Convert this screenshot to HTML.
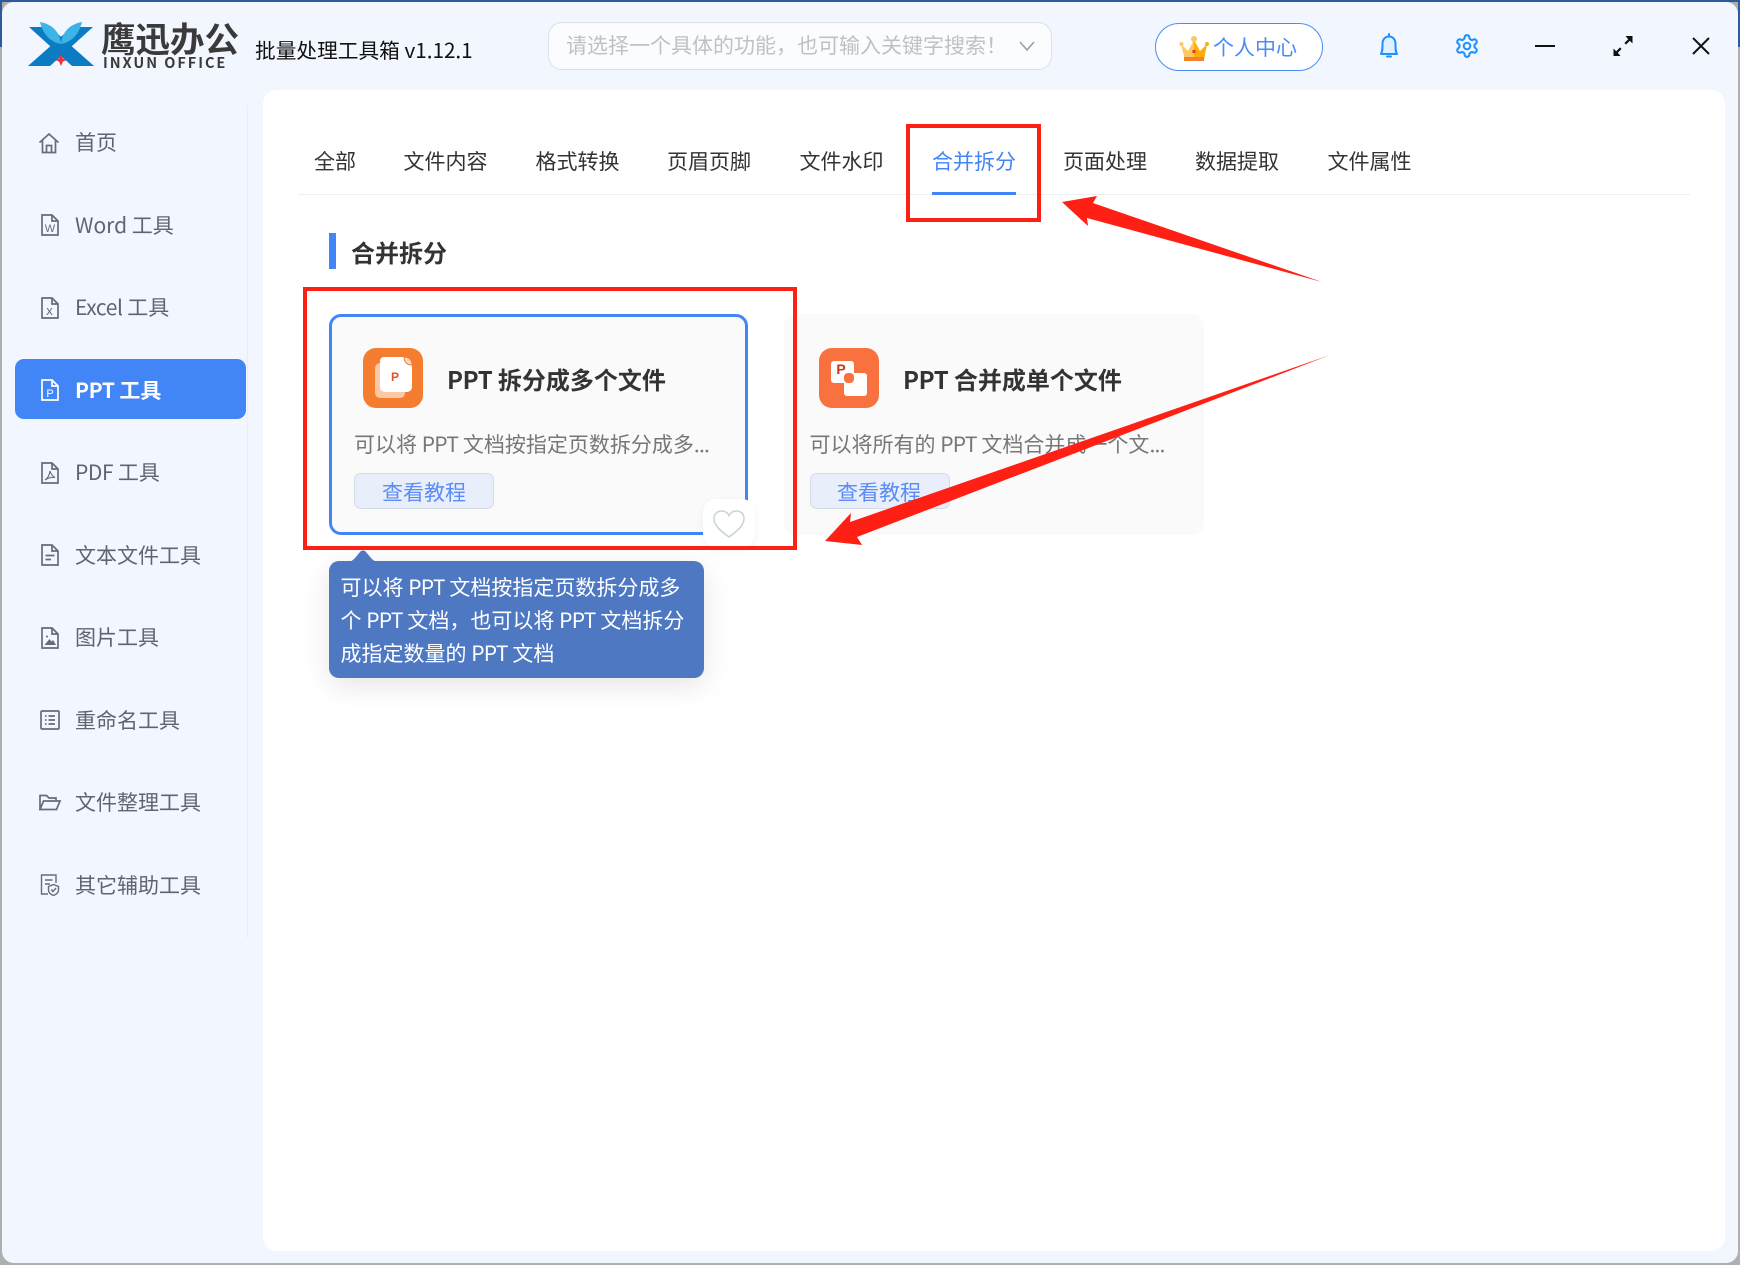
<!DOCTYPE html>
<html lang="zh-CN">
<head>
<meta charset="utf-8">
<title>批量处理工具箱</title>
<style>
html,body{margin:0;padding:0}
body{width:1740px;height:1265px;overflow:hidden;position:relative;background:#aeb0b0;font-family:"Noto Sans CJK SC","Liberation Sans",sans-serif;}
.abs{position:absolute}
.t{position:absolute;white-space:nowrap;line-height:30px;font-size:21px}
.side{color:#5f6470;left:75px}
.tab{color:#333;top:146px}
.l{letter-spacing:-.7px}
.s{letter-spacing:-.4px}
svg{position:absolute;overflow:visible}
.ic{fill:none;stroke:#666c78;stroke-width:1.7;stroke-linejoin:miter}
</style>
</head>
<body>
<div class="abs" style="left:0;top:0;width:1740px;height:2px;background:#2c5a9a"></div>
<div class="abs" style="left:0;top:0;width:2px;height:47px;background:#2c5a9a"></div>
<div class="abs" style="left:1738px;top:0;width:2px;height:47px;background:#2c5a9a"></div>
<!-- window -->
<div class="abs" style="left:2px;top:2px;width:1736px;height:1261px;background:#f2f7ff;border-radius:12px"></div>

<!-- logo -->
<svg style="left:0;top:0" width="300" height="90">
  <path d="M29 27H50L94 66H72Z" fill="#0b7cc3"/>
  <path d="M93 27H72L28 66H50Z" fill="#0b7cc3"/>
  <path d="M40 22C52 24 60 32 61 44C50 42 43 34 40 22Z" fill="#3cb4e6"/>
  <path d="M82 22C70 24 62 32 61 44C72 42 79 34 82 22Z" fill="#3cb4e6"/>
  <path d="M61 54L63 58.500L67 60L63 61.500L61 66L59 61.500L55 60L59 58.500Z" fill="#f0343c"/>
</svg>
<div class="t" style="left:101px;top:15px;font-size:34.500px;line-height:44px;font-weight:700;color:#3a3a3a">鹰迅办公</div>
<div class="t" style="left:103px;top:53px;font-size:14.500px;line-height:20px;font-weight:700;color:#3a3a3a;letter-spacing:1.950px">INXUN OFFICE</div>
<div class="t" style="left:255px;top:34px;color:#111;font-size:20.700px">批量处理工具箱 v1.12.1</div>

<!-- search -->
<div class="abs" style="left:548px;top:22px;width:502px;height:46px;border:1px solid #dcdfe4;border-radius:14px;background:#fbfcfe"></div>
<div class="t" style="left:566px;top:30px;color:#bfc1c4;font-size:21px">请选择一个具体的功能，也可输入关键字搜索！</div>
<svg style="left:1019px;top:41px" width="16" height="10"><path d="M1 1L8 9L15 1" fill="none" stroke="#9a9ca0" stroke-width="1.500"/></svg>

<!-- personal center -->
<div class="abs" style="left:1155px;top:23px;width:166px;height:46px;border:1px solid #4a8cf7;border-radius:24px;background:#fff"></div>
<svg style="left:1180px;top:35px" width="29" height="28">
  <path d="M1 9L8 16L14 5L14 25H5Z" fill="#fbc862"/>
  <path d="M14 5L20 16L27 9L24 25H14Z" fill="#fdae06"/>
  <rect x="4" y="22" width="20" height="4" fill="#f47f31"/>
  <circle cx="14" cy="4" r="3" fill="#fbc862"/><circle cx="1.500" cy="9" r="2" fill="#fbc862"/><circle cx="27" cy="9" r="2" fill="#fdae06"/>
  <rect x="12.500" y="15" width="3" height="3" fill="#e0392b"/>
</svg>
<div class="t" style="left:1213px;top:32px;color:#4a8cf7">个人中心</div>

<!-- bell -->
<svg style="left:1379px;top:33px" width="20" height="26" viewBox="0 0 20 26">
  <path d="M2 21C3.500 19 3.500 16 3.500 11C3.500 6.500 6 3.500 10 3.500C14 3.500 16.500 6.500 16.500 11C16.500 16 16.500 19 18 21Z" fill="#dff0ff" stroke="#1e90ff" stroke-width="2" stroke-linejoin="round"/>
  <path d="M10 1V3.500M8 23.500H12" stroke="#1e90ff" stroke-width="2" stroke-linecap="round" fill="none"/>
</svg>
<!-- gear -->
<svg style="left:1454px;top:33px" width="26" height="26" viewBox="0 0 24 24" fill="none" stroke="#1e90ff" stroke-width="1.900">
  <path d="M12.220 2h-.44a2 2 0 0 0-2 2v.18a2 2 0 0 1-1 1.730l-.43.25a2 2 0 0 1-2 0l-.15-.08a2 2 0 0 0-2.730.73l-.22.38a2 2 0 0 0 .73 2.730l.15.1a2 2 0 0 1 1 1.720v.51a2 2 0 0 1-1 1.740l-.15.09a2 2 0 0 0-.73 2.730l.22.38a2 2 0 0 0 2.730.73l.15-.08a2 2 0 0 1 2 0l.43.25a2 2 0 0 1 1 1.730V20a2 2 0 0 0 2 2h.44a2 2 0 0 0 2-2v-.18a2 2 0 0 1 1-1.730l.43-.25a2 2 0 0 1 2 0l.15.08a2 2 0 0 0 2.730-.73l.22-.39a2 2 0 0 0-.73-2.730l-.15-.08a2 2 0 0 1-1-1.740v-.5a2 2 0 0 1 1-1.740l.15-.09a2 2 0 0 0 .73-2.730l-.22-.38a2 2 0 0 0-2.730-.73l-.15.08a2 2 0 0 1-2 0l-.43-.25a2 2 0 0 1-1-1.730V4a2 2 0 0 0-2-2z"/>
  <circle cx="12" cy="12" r="3"/>
</svg>
<!-- window buttons -->
<div class="abs" style="left:1535px;top:45px;width:20px;height:2px;background:#111"></div>
<svg style="left:1612px;top:35px" width="22" height="22" fill="#111">
  <path d="M20.500 1L20.500 8.500L17.800 5.800L14 9.600L12.400 8L16.200 4.200L13.500 1Z"/>
  <path d="M1.500 21L1.500 13.500L4.200 16.200L8 12.400L9.600 14L5.800 17.800L8.500 21Z"/>
</svg>
<svg style="left:1691px;top:36px" width="20" height="20"><path d="M2 2L18 18M18 2L2 18" stroke="#111" stroke-width="2"/></svg>

<!-- sidebar -->
<div class="abs" style="left:247px;top:105px;width:1px;height:833px;background:#e9edf4"></div>
<div class="abs" style="left:15px;top:359px;width:231px;height:60px;background:#4285f7;border-radius:9px"></div>

<svg class="ic" style="left:38px;top:132px" width="22" height="22" viewBox="0 0 22 22"><path d="M1.500 10.500L11 2L20.500 10.500M4.500 8V20.500H17.500V8M8.500 20.500V13.500H13.500V20.500"/></svg>
<div class="t side" style="top:127px">首页</div>

<svg class="ic" style="left:41px;top:214px" width="18" height="22" viewBox="0 0 18 22"><path d="M1 1H11L17 7V21H1ZM11 1V7H17"/><text x="9" y="18" text-anchor="middle" font-size="11" font-family="Liberation Sans" fill="#666c78" stroke="none">W</text></svg>
<div class="t side" style="top:210px">Word 工具</div>

<svg class="ic" style="left:41px;top:297px" width="18" height="22" viewBox="0 0 18 22"><path d="M1 1H11L17 7V21H1ZM11 1V7H17"/><text x="8.500" y="18" text-anchor="middle" font-size="13" font-family="Liberation Sans" fill="#666c78" stroke="none">x</text></svg>
<div class="t side" style="top:292px"><span class="s">Excel</span> 工具</div>

<svg class="ic" style="left:41px;top:379px;stroke:#fff" width="18" height="22" viewBox="0 0 18 22"><path d="M1 1H11L17 7V21H1ZM11 1V7H17"/><text x="9" y="18" text-anchor="middle" font-size="11" font-family="Liberation Sans" fill="#fff" stroke="none">P</text></svg>
<div class="t" style="left:75px;top:375px;color:#fff;font-weight:700"><span class="s">PPT</span> 工具</div>

<svg class="ic" style="left:41px;top:462px" width="18" height="22" viewBox="0 0 18 22"><path d="M1 1H11L17 7V21H1ZM11 1V7H17"/><path d="M9 9C8.500 13 7 16 4 18C7 16 11 15 14 15.500C11 14 10 12 9 9Z" stroke-width="1.100"/></svg>
<div class="t side" style="top:457px"><span class="s">PDF</span> 工具</div>

<svg class="ic" style="left:41px;top:544px" width="18" height="22" viewBox="0 0 18 22"><path d="M1 1H11L17 7V21H1ZM11 1V7H17M4.500 11.500H13.500M4.500 15.500H10"/></svg>
<div class="t side" style="top:540px">文本文件工具</div>

<svg class="ic" style="left:41px;top:627px" width="18" height="22" viewBox="0 0 18 22"><path d="M1 1H11L17 7V21H1ZM11 1V7H17"/><path d="M3.500 18L8.500 12L10.500 14.500L12 13L15 18Z" fill="#666c78" stroke="none"/><circle cx="6" cy="9.500" r="1" fill="#666c78" stroke="none"/></svg>
<div class="t side" style="top:622px">图片工具</div>

<svg class="ic" style="left:40px;top:710px" width="20" height="20" viewBox="0 0 20 20"><rect x="1" y="1" width="18" height="18" rx="1"/><path d="M8.500 6H15M8.500 10H15M8.500 14H15M5 6H6.500M5 10H6.500M5 14H6.500"/></svg>
<div class="t side" style="top:705px">重命名工具</div>

<svg class="ic" style="left:39px;top:794px" width="22" height="17" viewBox="0 0 22 17"><path d="M1 15.500V1.500H7.500L10 4H17V7M1 15.500L4.500 7H21L17.500 15.500Z"/></svg>
<div class="t side" style="top:787px">文件整理工具</div>

<svg class="ic" style="left:40px;top:874px;stroke-width:1.400" width="20" height="22" viewBox="0 0 20 22"><path d="M8 20H1.500V1H16V9M5 6H12.500M5 10H10"/><path d="M8.500 12.500L13.500 10.500L18.500 12.500V16C18.500 19 16 20.500 13.500 21.500C11 20.500 8.500 19 8.500 16Z"/><path d="M11.300 15.500L13 17.500L16 14"/></svg>
<div class="t side" style="top:870px">其它辅助工具</div>

<!-- main panel -->
<div class="abs" style="left:263px;top:90px;width:1462px;height:1161px;background:#fff;border-radius:14px"></div>
<div class="abs" style="left:298px;top:194px;width:1392px;height:1px;background:#eeeff1"></div>

<div class="t tab" style="left:314px">全部</div>
<div class="t tab" style="left:403.500px">文件内容</div>
<div class="t tab" style="left:535.500px">格式转换</div>
<div class="t tab" style="left:667px">页眉页脚</div>
<div class="t tab" style="left:799.500px">文件水印</div>
<div class="t tab" style="left:932px;color:#4285f7">合并拆分</div>
<div class="t tab" style="left:1063px">页面处理</div>
<div class="t tab" style="left:1195px">数据提取</div>
<div class="t tab" style="left:1327.500px">文件属性</div>
<div class="abs" style="left:932px;top:192px;width:84px;height:3px;background:#4285f7"></div>

<div class="abs" style="left:329px;top:233px;width:7px;height:36px;background:#4285f7"></div>
<div class="t" style="left:351px;top:237px;font-size:24px;font-weight:700;color:#333">合并拆分</div>

<!-- card 1 -->
<div class="abs" style="left:329px;top:314px;width:413px;height:215px;border:3px solid #4285f7;border-radius:12px;background:#fafafa"></div>
<svg style="left:363px;top:348px" width="60" height="60">
  <rect width="60" height="60" rx="13" fill="#f47d30"/>
  <rect x="12" y="15" width="30" height="35" rx="5" fill="#fcc8a6"/>
  <path d="M21 9H41L49 17V39A5 5 0 0 1 44 44H22A5 5 0 0 1 17 39V13A4 4 0 0 1 21 9Z" fill="#fff"/>
  <path d="M41 9C46 9 49 12 49 17C44 17 41 14 41 9Z" fill="#fcd9c3" stroke="#f47d30" stroke-width="1"/>
  <text x="32" y="33" text-anchor="middle" font-size="12" font-weight="700" font-family="Liberation Sans" fill="#e2502b">P</text>
</svg>
<div class="t" style="left:447px;top:364px;font-size:24px;font-weight:700;color:#333"><span class="s">PPT</span> 拆分成多个文件</div>
<div class="t" style="left:354px;top:429px;color:#777">可以将 <span class="l">PPT</span> 文档按指定页数拆分成多<span style="letter-spacing:-.8px">...</span></div>
<div class="abs" style="left:354px;top:473px;width:138px;height:34px;background:#e9eefb;border:1px solid #d6dbe8;border-radius:7px"></div>
<div class="t" style="left:382px;top:477px;color:#5b8bf5">查看教程</div>
<!-- heart -->
<div class="abs" style="left:703px;top:499px;width:52px;height:48px;background:#fff;border-radius:13px;box-shadow:0 3px 8px rgba(0,0,0,.06)"></div>
<svg style="left:712px;top:509px" width="34" height="30" viewBox="0 0 34 30"><path d="M17 28C10 23 2 17 2 9.500C2 5 5.500 2 9.500 2C12.500 2 15.500 3.500 17 6.500C18.500 3.500 21.500 2 24.500 2C28.500 2 32 5 32 9.500C32 17 24 23 17 28Z" fill="none" stroke="#c7d2d9" stroke-width="1.500"/></svg>

<!-- card 2 -->
<div class="abs" style="left:784px;top:314px;width:420px;height:221px;border-radius:12px;background:#fafafa"></div>
<svg style="left:819px;top:348px" width="60" height="60">
  <rect width="60" height="60" rx="13" fill="#f9713f"/>
  <rect x="12" y="13" width="23" height="22" rx="3" fill="#fff"/>
  <rect x="25" y="25" width="23" height="23" rx="3" fill="#fff"/>
  <rect x="25" y="25" width="10" height="10" rx="4" fill="#f9713f"/>
  <text x="22" y="26" text-anchor="middle" font-size="14" font-weight="700" font-family="Liberation Sans" fill="#c53a10">P</text>
</svg>
<div class="t" style="left:903px;top:364px;font-size:24px;font-weight:700;color:#333"><span class="s">PPT</span> 合并成单个文件</div>
<div class="t" style="left:809.500px;top:429px;color:#777">可以将所有的 <span class="l">PPT</span> 文档合并成一个文<span style="letter-spacing:-.8px">...</span></div>
<div class="abs" style="left:810px;top:473px;width:138px;height:34px;background:#e9eefb;border:1px solid #d6dbe8;border-radius:7px"></div>
<div class="t" style="left:837px;top:477px;color:#5b8bf5">查看教程</div>

<!-- tooltip -->
<div class="abs" style="left:329px;top:561px;width:375px;height:117px;background:#4e78c2;border-radius:10px;box-shadow:0 8px 28px rgba(0,0,0,.10)"></div>
<svg style="left:345px;top:549px" width="36" height="14"><path d="M2 13C6 13 8 11 10 9L15 3C17 .8 19 .8 21 3L26 9C28 11 30 13 34 13Z" fill="#4e78c2"/></svg>
<div class="t" style="left:340.500px;top:572px;color:#fff">可以将 <span class="l">PPT</span> 文档按指定页数拆分成多</div>
<div class="t" style="left:340.500px;top:605px;color:#fff">个 <span class="l">PPT</span> 文档，也可以将 <span class="l">PPT</span> 文档拆分</div>
<div class="t" style="left:340.500px;top:638px;color:#fff">成指定数量的 <span class="l">PPT</span> 文档</div>

<!-- annotations -->
<div class="abs" style="left:906px;top:124px;width:127px;height:90px;border:4px solid #ff2015"></div>
<div class="abs" style="left:303px;top:287px;width:486px;height:255px;border:4px solid #ff2015"></div>
<svg style="left:0;top:0" width="1740" height="1265">
  <polygon points="1062,202 1097,196 1093,203 1322,282 1087,218 1088,226" fill="#ff2015"/>
  <polygon points="825,541 851,513 850,522 1330,355 857,537 862,545" fill="#ff2015"/>
</svg>
</body>
</html>
